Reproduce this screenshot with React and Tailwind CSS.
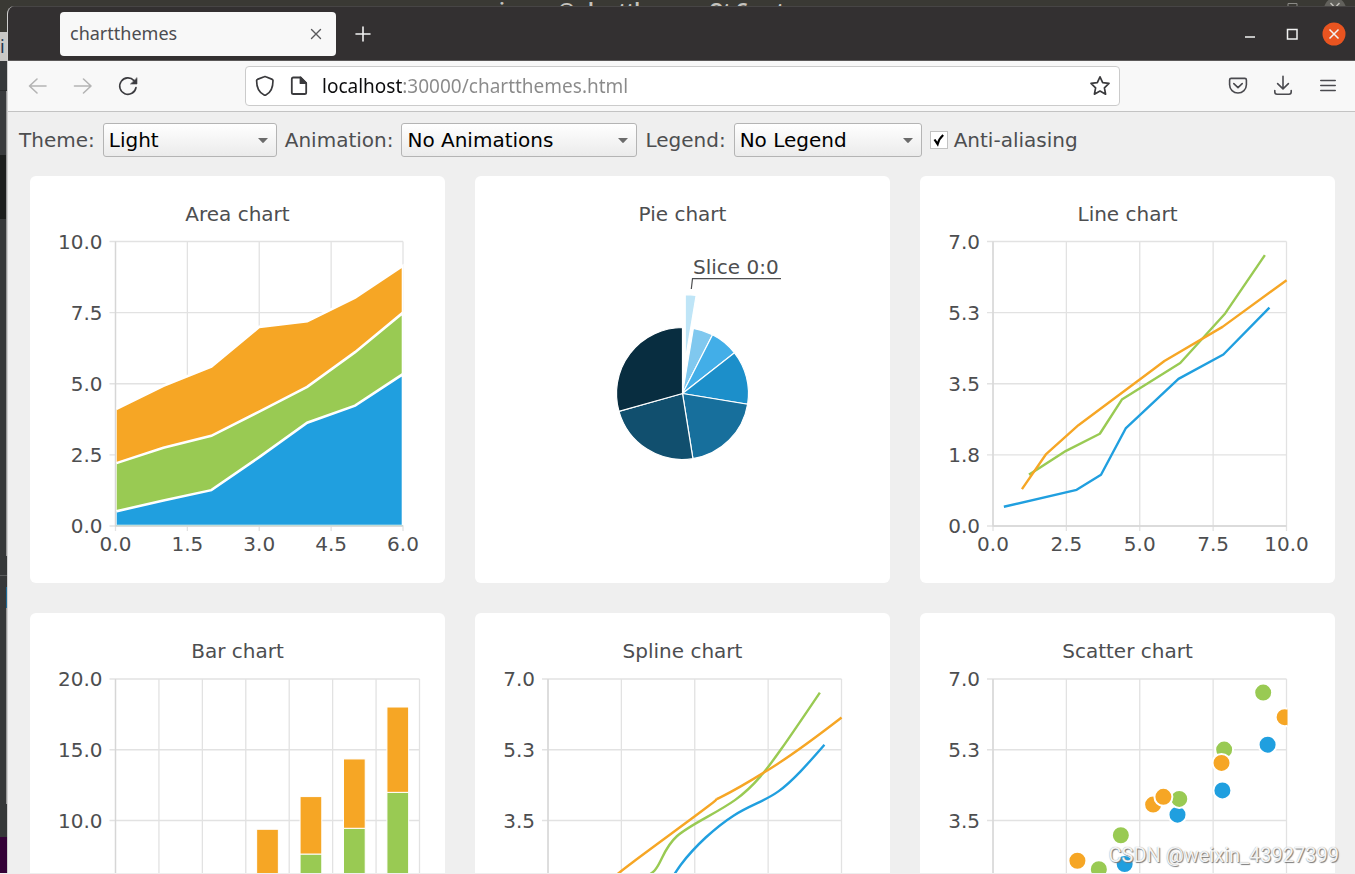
import React, { useMemo, useState } from 'react';

const BLUE = '#209fdf';
const GREEN = '#99ca53';
const ORANGE = '#f6a625';

const SERIES = [
  {
    color: BLUE,
    points: [[0.41, 0.48], [2.85, 0.89], [3.68, 1.26], [4.52, 2.4], [6.32, 3.62], [7.85, 4.22], [9.39, 5.35]],
  },
  {
    color: GREEN,
    points: [[1.26, 1.28], [2.49, 1.85], [3.64, 2.27], [4.39, 3.11], [6.38, 4.01], [7.91, 5.23], [9.24, 6.64]],
  },
  {
    color: ORANGE,
    points: [[1.01, 0.93], [1.8, 1.76], [2.91, 2.48], [5.49, 3.87], [5.84, 4.06], [7.82, 4.9], [9.97, 6.03]],
  },
];

// upper edges, drawn back to front
const AREAS = [
  { color: ORANGE, values: [4.1, 4.93, 5.6, 7, 7.2, 8.03, 9.15] },
  { color: GREEN, values: [2.2, 2.75, 3.17, 4.02, 4.89, 6.11, 7.5] },
  { color: BLUE, values: [0.51, 0.9, 1.26, 2.42, 3.63, 4.23, 5.34] },
];

const PIE_COLORS = ['#bfe5f7', '#80c8ef', '#42aee8', '#1c8fca', '#176f9c', '#114f6e', '#082d40'];

const XY_AXES = { xLabels: ['0.0', '2.5', '5.0', '7.5', '10.0'], yLabels: ['7.0', '5.3', '3.5', '1.8', '0.0'] };

const AREA_PLOT = {
  left: 85.5, right: 373, top: 65.5, bottom: 350, xMax: 6, yMax: 10, columns: 4,
  xLabels: ['0.0', '1.5', '3.0', '4.5', '6.0'],
  yLabels: ['10.0', '7.5', '5.0', '2.5', '0.0'],
};
const LINE_PLOT = { left: 73, right: 366.5, top: 65.5, bottom: 350, xMax: 10, yMax: 7, columns: 4, ...XY_AXES };
const LOWER_PLOT = { ...LINE_PLOT, top: 66, bottom: 349 };
const BAR_PLOT = {
  left: 85.5, right: 389.5, top: 66, bottom: 349, xMax: 7, yMax: 20, columns: 7,
  xLabels: [],
  yLabels: ['20.0', '15.0', '10.0', '5.0', '0.0'],
};

const px = (plot, x) => plot.left + (x / plot.xMax) * (plot.right - plot.left);
const py = (plot, y) => plot.bottom - (y / plot.yMax) * (plot.bottom - plot.top);

// First control points of a natural cubic spline (tridiagonal solve)
const firstControlPoints = (v) => {
  const n = v.length - 1;
  const rhs = [];
  rhs[0] = v[0] + 2 * v[1];
  for (let i = 1; i < n - 1; i++) rhs[i] = 4 * v[i] + 2 * v[i + 1];
  rhs[n - 1] = (8 * v[n - 1] + v[n]) / 2;

  const out = [];
  const tmp = [];
  let b = 2;
  out[0] = rhs[0] / b;
  for (let i = 1; i < n; i++) {
    tmp[i] = 1 / b;
    b = (i < n - 1 ? 4 : 3.5) - tmp[i];
    out[i] = (rhs[i] - out[i - 1]) / b;
  }
  for (let i = 1; i < n; i++) out[n - i - 1] -= tmp[n - i] * out[n - i];
  return out;
};

const splinePath = (points) => {
  const xs = points.map((p) => p[0]);
  const ys = points.map((p) => p[1]);
  const cx = firstControlPoints(xs);
  const cy = firstControlPoints(ys);
  const n = points.length - 1;
  let d = `M${xs[0]} ${ys[0]}`;
  for (let i = 0; i < n; i++) {
    const x2 = i < n - 1 ? 2 * xs[i + 1] - cx[i + 1] : (xs[n] + cx[n - 1]) / 2;
    const y2 = i < n - 1 ? 2 * ys[i + 1] - cy[i + 1] : (ys[n] + cy[n - 1]) / 2;
    d += `C${cx[i]} ${cy[i]} ${x2} ${y2} ${xs[i + 1]} ${ys[i + 1]}`;
  }
  return d;
};

const Axes = ({ plot }) => {
  const { left, right, top, bottom, columns, xLabels, yLabels } = plot;
  const stepX = (right - left) / columns;
  const stepY = (bottom - top) / 4;

  return (
    <g>
      {Array.from({ length: columns + 1 }, (_, i) => (
        <line
          key={`v${i}`}
          x1={left + i * stepX}
          x2={left + i * stepX}
          y1={top}
          y2={bottom + 5}
          stroke="#e2e2e2"
          strokeWidth="1.3"
        />
      ))}
      {yLabels.map((label, i) => (
        <g key={label}>
          <line x1={left - 6} x2={right} y1={top + i * stepY} y2={top + i * stepY} stroke="#e2e2e2" strokeWidth="1.3" />
          <text x={left - 13} y={top + i * stepY + 7} textAnchor="end">{label}</text>
        </g>
      ))}
      <path d={`M${left} ${top}V${bottom}H${right}`} fill="none" stroke="#d6d6d6" strokeWidth="1.3" />
      {xLabels.map((label, i) => (
        <text key={label} x={left + i * stepX} y={bottom + 25} textAnchor="middle">{label}</text>
      ))}
    </g>
  );
};

const ChartCard = ({ title, children }) => (
  <section className="overflow-hidden rounded-md bg-white">
    <svg viewBox="0 0 415 407" className="block w-full fill-[#4d4e50] text-[20px]" role="img" aria-label={title}>
      <text x="207.5" y="44.5" textAnchor="middle">{title}</text>
      {children}
    </svg>
  </section>
);

const AreaChart = () => {
  const plot = AREA_PLOT;
  return (
    <ChartCard title="Area chart">
      <Axes plot={plot} />
      <clipPath id="area-clip">
        <rect x="86.2" y="60" width="287.5" height="289.3" />
      </clipPath>
      <g clipPath="url(#area-clip)" stroke="#fff" strokeWidth="2.6">
        {AREAS.map(({ color, values }) => (
          <path
            key={color}
            fill={color}
            d={`M85.5 350${values.map((v, i) => `L${px(plot, i)} ${py(plot, v)}`).join('')}V350Z`}
          />
        ))}
      </g>
    </ChartCard>
  );
};

const PieChart = () => {
  const slices = useMemo(() => {
    const values = SERIES[0].points.map((p) => p[1]);
    const total = values.reduce((a, b) => a + b, 0);
    let angle = 0;
    return values.map((v, i) => {
      const start = angle;
      angle += (v / total) * Math.PI * 2;
      const mid = (start + angle) / 2;
      const shift = i === 0 ? 33 : 0;
      const cx = 207.5 + Math.sin(mid) * shift;
      const cy = 217.5 - Math.cos(mid) * shift;
      const at = (a) => `${cx + Math.sin(a) * 66} ${cy - Math.cos(a) * 66}`;
      return `M${cx} ${cy}L${at(start)}A66 66 0 0 1 ${at(angle)}Z`;
    });
  }, []);

  return (
    <ChartCard title="Pie chart">
      {slices.map((d, i) => (
        <path key={i} d={d} fill={PIE_COLORS[i]} stroke="#fff" strokeWidth="1.2" />
      ))}
      <path d="M216.3 113L217.5 102.7H306" fill="none" stroke="#4d4e50" strokeWidth="1.2" />
      <text x="218" y="98">Slice 0:0</text>
    </ChartCard>
  );
};

const LineChart = () => (
  <ChartCard title="Line chart">
    <Axes plot={LINE_PLOT} />
    {SERIES.map(({ color, points }) => (
      <polyline
        key={color}
        fill="none"
        stroke={color}
        strokeWidth="2.4"
        strokeLinecap="square"
        strokeLinejoin="bevel"
        points={points.map(([x, y]) => `${px(LINE_PLOT, x)},${py(LINE_PLOT, y)}`).join(' ')}
      />
    ))}
  </ChartCard>
);

const BarChart = () => {
  const plot = BAR_PLOT;
  return (
    <ChartCard title="Bar chart">
      <Axes plot={plot} />
      {SERIES[0].points.map((_, i) => {
        let base = 0;
        return SERIES.map(({ color, points }) => {
          const value = points[i][1];
          base += value;
          return (
            <rect
              key={`${color}${i}`}
              x={px(plot, i + 0.25)}
              y={py(plot, base)}
              width={px(plot, 0.5) - plot.left}
              height={plot.bottom - py(plot, value)}
              fill={color}
              stroke="#fff"
            />
          );
        });
      })}
    </ChartCard>
  );
};

const SplineChart = () => (
  <ChartCard title="Spline chart">
    <Axes plot={LOWER_PLOT} />
    {SERIES.map(({ color, points }) => (
      <path
        key={color}
        fill="none"
        stroke={color}
        strokeWidth="2.4"
        strokeLinecap="square"
        d={splinePath(points.map(([x, y]) => [px(LOWER_PLOT, x), py(LOWER_PLOT, y)]))}
      />
    ))}
  </ChartCard>
);

const ScatterChart = () => (
  <ChartCard title="Scatter chart">
    <Axes plot={LOWER_PLOT} />
    <clipPath id="scatter-clip">
      <rect x="73" y="66" width="294.5" height="283" />
    </clipPath>
    <g clipPath="url(#scatter-clip)" stroke="#fff" strokeWidth="2">
      {SERIES.map(({ color, points }) =>
        points.map(([x, y]) => (
          <circle key={`${color}${x}`} cx={px(LOWER_PLOT, x) - 1} cy={py(LOWER_PLOT, y) - 1} r="9" fill={color} />
        ))
      )}
    </g>
  </ChartCard>
);

const SelectField = ({ id, label, options, className }) => (
  <>
    <label htmlFor={id}>{label}</label>
    <div className={`relative ${className}`}>
      <select
        id={id}
        className="h-[34px] w-full appearance-none rounded-[3px] border border-[#b4b4b4] bg-linear-to-b from-white to-[#ebebeb] pl-[5px] text-black"
      >
        {options.map((option) => (
          <option key={option}>{option}</option>
        ))}
      </select>
      <svg viewBox="0 0 10 5" className="pointer-events-none absolute top-[15px] right-[9px] h-[5px] w-[10px]">
        <path d="M0 0H10L5.8 4.6Q5 5.2 4.2 4.6Z" fill="#6b6b6b" />
      </svg>
    </div>
  </>
);

// Part of the window behind that shows at the left edge
const BackWindowEdge = () => (
  <div className="flex w-[7px] shrink-0 flex-col overflow-hidden">
    <div className="h-[26px] shrink-0" />
    <div className="h-[29px] shrink-0 overflow-hidden bg-[#c9c8c6] text-[18px] leading-[29px] text-[#22344e]">i</div>
    <div className="h-[30px] shrink-0 border-b border-[#2a2c2d] bg-[#36393b]" />
    <div className="h-16 shrink-0 border-r border-[#9b9b9b] bg-[#393b3d]" />
    <div className="h-16 shrink-0 border-r border-[#9b9b9b] bg-[#1c1e1d]" />
    <div className="h-[337px] shrink-0 border-r border-[#9b9b9b] bg-[#363839]" />
    <div className="h-5 shrink-0 border-b border-[#5a5c5d] bg-[#363839]" />
    <div className="h-[11px] shrink-0 bg-[#363839]" />
    <div className="h-[21px] shrink-0 border-r border-[#1d6a96] bg-[#363839]" />
    <div className="h-[196px] shrink-0 border-r border-[#9b9b9b] bg-[#363839]" />
    <div className="h-[33px] shrink-0 bg-[#363839]" />
    <div className="flex-1 bg-[#340237]" />
  </div>
);

const ToolButton = ({ label, className = 'text-[#4a4a4f]', children }) => (
  <button type="button" aria-label={label} className={`flex h-10 w-[45px] shrink-0 items-center justify-center ${className}`}>
    <svg viewBox="0 0 22 22" className="size-[22px]" fill="none" stroke="currentColor" strokeWidth="1.6" strokeLinecap="round" strokeLinejoin="round">
      {children}
    </svg>
  </button>
);

const WindowButton = ({ label, children }) => (
  <button type="button" aria-label={label} className="flex h-11 w-[42px] items-center justify-center">
    <svg viewBox="0 0 24 24" className="size-6" fill="none" stroke="#f2f2f2" strokeWidth="1.5">
      {children}
    </svg>
  </button>
);

const TitleBar = () => (
  <div className="flex h-[55px] shrink-0 items-center border-t border-b border-t-[#474545] border-b-[#5b5959] bg-[#333031]">
    <div className="ml-[52px] flex h-11 w-[276px] items-center justify-between rounded bg-[#f8f8f8] pr-3 pl-[10px] text-[18px] text-[#4c4c50]">
      <span>chartthemes</span>
      <button type="button" aria-label="Close tab">
        <svg viewBox="0 0 16 16" className="size-4" fill="none" stroke="#5a5a5d" strokeWidth="1.4" strokeLinecap="round">
          <path d="M3.5 3.5L12.5 12.5M12.5 3.5L3.5 12.5" />
        </svg>
      </button>
    </div>
    <button type="button" aria-label="New tab" className="flex w-[54px] justify-center">
      <svg viewBox="0 0 16 16" className="size-4" fill="none" stroke="#f2f2f2" strokeWidth="1.6" strokeLinecap="round">
        <path d="M8 1V15M1 8H15" />
      </svg>
    </button>
    <div className="ml-auto flex">
      <WindowButton label="Minimize">
        <path d="M7 15H17" />
      </WindowButton>
      <WindowButton label="Maximize">
        <rect x="7.5" y="7.5" width="9.5" height="9.5" />
      </WindowButton>
      <WindowButton label="Close">
        <circle cx="12" cy="12" r="11.5" fill="#e95420" stroke="none" />
        <path d="M7.5 7.5L16.5 16.5M16.5 7.5L7.5 16.5" />
      </WindowButton>
    </div>
  </div>
);

const NavBar = () => (
  <div className="flex h-[51px] shrink-0 items-center border-b border-[#c3c3c3] bg-[#f8f8f8] pr-[5px] pl-[7px]">
    <ToolButton label="Back" className="text-[#b4b4b4]">
      <path d="M19 11H2.5M10 4L2.5 11L10 18" />
    </ToolButton>
    <ToolButton label="Forward" className="text-[#b4b4b4]">
      <path d="M2.5 11H19M11.5 4L19 11L11.5 18" />
    </ToolButton>
    <ToolButton label="Reload" className="text-[#3c3c40]">
      <path d="M19 12.5A8.2 8.2 0 1 1 17 5.6" />
      <path d="M20 3V9H13.8Z" fill="currentColor" strokeWidth="0.6" />
    </ToolButton>

    <div className="mx-[95px] flex h-10 min-w-0 flex-1 items-center gap-3 rounded border border-[#cbcbcb] bg-white px-2 text-[#3a3a3d]">
      <svg viewBox="0 0 22 22" className="size-[22px] shrink-0" fill="none" stroke="currentColor" strokeWidth="1.7" strokeLinejoin="round">
        <path d="M10.2 1.8Q11 1.4 11.8 1.8L18.3 4.4Q19 4.8 19 5.6C19 12.5 16.8 17.8 11.9 20Q11 20.4 10.1 20C5.2 17.8 2.6 12.5 2.6 5.6Q2.6 4.8 3.4 4.4Z" />
      </svg>
      <svg viewBox="0 0 22 22" className="size-[22px] shrink-0" fill="none" stroke="currentColor" strokeWidth="1.8" strokeLinejoin="round">
        <path d="M12.5 2.5H5.4Q3.8 2.5 3.8 4.1V17.4Q3.8 19 5.4 19H16.6Q18.2 19 18.2 17.4V8.2Z" />
        <path d="M12.5 2.5V8.2H18.2Z" fill="currentColor" />
      </svg>
      <input
        type="text"
        aria-label="Address"
        defaultValue="localhost:30000/chartthemes.html"
        className="min-w-0 flex-1 bg-[linear-gradient(to_right,#0c0c0d_80px,#8a8a8a_80px)] bg-clip-text text-[19px] text-transparent outline-none"
      />
      <button type="button" aria-label="Bookmark this page">
        <svg viewBox="0 0 22 22" className="size-[22px]" fill="none" stroke="currentColor" strokeWidth="1.7" strokeLinejoin="round">
          <path d="M11 1.8L13.7 7.6L20 8.4L15.4 12.8L16.6 19.2L11 16.1L5.4 19.2L6.6 12.8L2 8.4L8.3 7.6Z" />
        </svg>
      </button>
    </div>

    <ToolButton label="Save to Pocket">
      <path d="M4.2 3.4H17.8Q19.4 3.4 19.4 5V9.8A8.4 8.2 0 0 1 2.6 9.8V5Q2.6 3.4 4.2 3.4Z" />
      <path d="M6.8 8.6L11 12.6L15.2 8.6" />
    </ToolButton>
    <ToolButton label="Downloads">
      <path d="M11 1.2V13.6M5.6 8.6L11 13.8L16.4 8.6M2.8 15.5V17Q2.8 19.2 5 19.2H17Q19.2 19.2 19.2 17V15.5" />
    </ToolButton>
    <ToolButton label="Open menu">
      <path d="M3.8 5.5H18.2M3.8 10.5H18.2M3.8 15.5H18.2" />
    </ToolButton>
  </div>
);

const App = () => {
  const [antialiasing, setAntialiasing] = useState(true);

  return (
    <div className="flex h-screen flex-col overflow-hidden border-b border-[#eeeeee] bg-[#3a3934] font-['Noto_Sans',sans-serif]">
      {/* Title bar of the window behind */}
      <div className="relative flex h-[6px] shrink-0 justify-center overflow-hidden text-[18px] leading-[18px] font-bold text-[#c4c2bd]">
        <span className="-ml-20 whitespace-nowrap">main.cpp @ chartthemes - Qt Creator</span>
        <svg viewBox="0 0 72 6" className="absolute top-0 right-0 h-[6px] w-[72px]" fill="none">
          <path d="M5 6V3.5H14V6" stroke="#8b8a86" />
          <circle cx="52" cy="9" r="11" fill="#62615c" />
          <path d="M47.5 3L50.5 6M56.5 3L53.5 6" stroke="#c4c2bd" strokeWidth="1.5" />
        </svg>
      </div>

      <div className="flex min-h-0 flex-1">
        <BackWindowEdge />
        <div className="flex min-w-0 flex-1 flex-col overflow-hidden rounded-tl-lg border-l border-[#cfcfcf] bg-[#efefef]">
          <TitleBar />
          <NavBar />

          <main className="font-['DejaVu_Sans',sans-serif] text-[20px] text-[#4d4e50]">
            <form className="flex items-center gap-2 px-[11px] pt-[11px] whitespace-nowrap">
              <SelectField
                id="theme"
                label="Theme:"
                className="w-[174px]"
                options={['Light', 'Blue Cerulean', 'Dark', 'Brown Sand', 'Blue NCS', 'High Contrast', 'Blue Icy', 'Qt']}
              />
              <SelectField
                id="animation"
                label="Animation:"
                className="w-[236px]"
                options={['No Animations', 'GridAxis Animations', 'Series Animations', 'All Animations']}
              />
              <SelectField
                id="legend"
                label="Legend:"
                className="w-[188px]"
                options={['No Legend', 'Legend Top', 'Legend Bottom', 'Legend Left', 'Legend Right']}
              />
              <label className="flex items-center gap-[6px]">
                <span className="relative size-[18px]">
                  <input
                    type="checkbox"
                    checked={antialiasing}
                    onChange={(e) => setAntialiasing(e.target.checked)}
                    className="peer block size-[18px] appearance-none border border-[#c2c2c2] bg-white"
                  />
                  <svg viewBox="0 0 18 18" className="pointer-events-none absolute inset-0 hidden size-[18px] peer-checked:block">
                    <path d="M4.5 8.5L7.6 13.2C8.6 9.6 10.4 6.4 13.2 4" fill="none" stroke="#000" strokeWidth="2.2" />
                  </svg>
                </span>
                Anti-aliasing
              </label>
            </form>

            <div className="grid grid-cols-3 gap-[30px] pt-[19px] pr-5 pl-[22px]">
              <AreaChart />
              <PieChart />
              <LineChart />
              <BarChart />
              <SplineChart />
              <ScatterChart />
            </div>
          </main>
        </div>
      </div>

      <div className="pointer-events-none absolute right-4 bottom-[7px] font-['Roboto',sans-serif] text-[20px] leading-6 text-white/90 [text-shadow:1px_1px_1px_#777,0_0_1px_#999]">
        CSDN @weixin_43927399
      </div>
    </div>
  );
};

export default App;
